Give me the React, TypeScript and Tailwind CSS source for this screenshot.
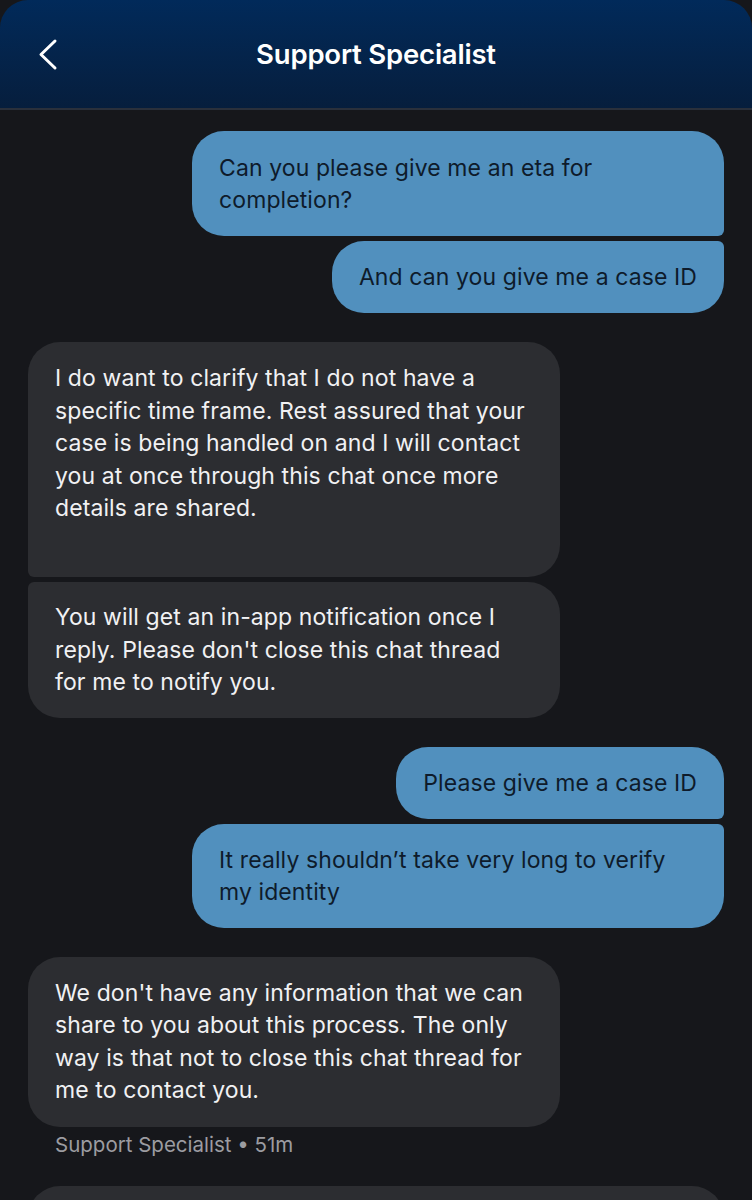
import React from "react";

type Side = "me" | "them";

const corner: Record<string, string> = {
  "me-first": "rounded-[32px] rounded-br-[6px]",
  "me-last": "rounded-[32px] rounded-tr-[6px]",
  "them-first": "rounded-[32px] rounded-bl-[6px]",
  "them-last": "rounded-[32px] rounded-tl-[6px]",
  single: "rounded-[32px]",
};

function Bubble({
  side,
  shape,
  wide,
  className = "",
  children,
}: {
  side: Side;
  shape: string;
  wide?: boolean;
  className?: string;
  children: React.ReactNode;
}) {
  const tone =
    side === "me"
      ? "bg-[#5190be] text-[#0e1b2b] leading-[32px]"
      : "bg-[#2c2d31] text-[#f1f1f3] leading-[32.5px]";
  return (
    <div
      className={`${tone} ${corner[shape]} ${
        wide ? "w-[532px]" : ""
      } px-[27px] text-[23px] tracking-[0.1px] whitespace-nowrap ${className}`}
    >
      {children}
    </div>
  );
}

export default function App() {
  return (
    <div
      className="w-[752px] h-[1200px] overflow-hidden bg-[#16171b]"
      style={{ fontFamily: "Inter, 'Noto Sans', sans-serif" }}
    >
      <header className="h-[110px] rounded-t-[28px] bg-gradient-to-b from-[#012a5a] to-[#061e3d] border-b-2 border-[#2a303b] grid grid-cols-[1fr_auto_1fr] items-center pt-[2px]">
        <button className="pl-[38px] justify-self-start">
          <svg width="22" height="34" viewBox="0 0 22 34" fill="none">
            <path
              d="M17 3 L3 16.5 L17 30"
              stroke="white"
              strokeWidth="3"
              strokeLinecap="round"
              strokeLinejoin="round"
            />
          </svg>
        </button>
        <h1 className="text-white text-[27.5px] font-semibold tracking-[-0.2px]">
          Support Specialist
        </h1>
        <div />
      </header>

      <main className="px-[28px] pt-[21px] flex flex-col gap-[29px]">
        <div className="flex flex-col items-end gap-[5px]">
          <Bubble side="me" shape="me-first" wide className="pt-[21px] pb-[20px]">
            Can you please give me an eta for
            <br />
            completion?
          </Bubble>
          <Bubble side="me" shape="me-last" className="py-[20px]">
            And can you give me a case ID
          </Bubble>
        </div>

        <div className="flex flex-col items-start gap-[5px]">
          <Bubble side="them" shape="them-first" wide className="pt-[20px] pb-[52.5px]">
            I do want to clarify that I do not have a
            <br />
            specific time frame. Rest assured that your
            <br />
            case is being handled on and I will contact
            <br />
            you at once through this chat once more
            <br />
            details are shared.
          </Bubble>
          <Bubble side="them" shape="them-last" wide className="py-[19px]">
            You will get an in-app notification once I
            <br />
            reply. Please don't close this chat thread
            <br />
            for me to notify you.
          </Bubble>
        </div>

        <div className="flex flex-col items-end gap-[5px]">
          <Bubble side="me" shape="me-first" className="py-[20px]">
            Please give me a case ID
          </Bubble>
          <Bubble side="me" shape="me-last" wide className="py-[20px]">
            It really shouldn’t take very long to verify
            <br />
            my identity
          </Bubble>
        </div>

        <div className="flex flex-col items-start">
          <Bubble side="them" shape="single" wide className="py-[20px]">
            We don't have any information that we can
            <br />
            share to you about this process. The only
            <br />
            way is that not to close this chat thread for
            <br />
            me to contact you.
          </Bubble>
          <div className="pl-[27px] pt-[5px] text-[20.5px] text-[#9c9ca1] leading-[26px]">
            Support Specialist • 51m
          </div>
          <div className="mt-[28px] w-full h-[80px] rounded-[32px] bg-[#2c2d31]" />
        </div>
      </main>
    </div>
  );
}
